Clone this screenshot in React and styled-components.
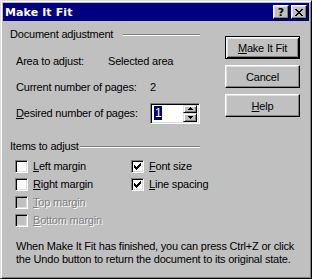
import React from "react";
import styled, { createGlobalStyle, css } from "styled-components";

const Global = createGlobalStyle`
  html, body { margin: 0; padding: 0; background: #c0c0c0; }
  body { font-family: "Liberation Sans", Arial, sans-serif; font-size: 11px; letter-spacing: -0.2px; color: #000; }
`;

const Win = styled.div`
  width: 312px;
  height: 279px;
  box-sizing: border-box;
  background: #c0c0c0;
  border: 1px solid;
  border-color: #dfdfdf #000 #000 #dfdfdf;
  box-shadow: inset 1px 1px #fff, inset -1px -1px #808080;
  padding: 2px;
  display: flex;
  flex-direction: column;
`;

const TitleBar = styled.div`
  height: 18px;
  background: #000080;
  display: flex;
  align-items: center;
  padding: 0 2px 0 2px;
  flex-shrink: 0;
`;

const TitleText = styled.div`
  flex: 1;
  color: #fff;
  font-family: "DejaVu Sans", Verdana, sans-serif;
  font-weight: bold;
  font-size: 11px;
  letter-spacing: 0.1px;
`;

const CapButton = styled.div`
  width: 16px;
  height: 14px;
  box-sizing: border-box;
  background: #c0c0c0;
  border: 1px solid;
  border-color: #fff #000 #000 #fff;
  box-shadow: inset -1px -1px #808080, inset 1px 1px #dfdfdf;
  display: flex;
  align-items: center;
  justify-content: center;
  margin-left: ${(p) => p.$gap || 0}px;
  font-family: "DejaVu Sans", sans-serif;
  font-weight: bold;
  font-size: 11px;
  letter-spacing: 0;
  line-height: 1;
`;

const Body = styled.div`
  flex: 1;
  display: flex;
  flex-direction: column;
`;

const Top = styled.div`
  display: flex;
`;

const LeftCol = styled.div`
  width: 190px;
  padding-left: 7px;
  display: flex;
  flex-direction: column;
`;

const GroupHead = styled.div`
  height: 13px;
  display: flex;
  align-items: center;
  margin-top: ${(p) => p.$top}px;
  line-height: 13px;
`;

const Etch = styled.div`
  flex: 1;
  height: 0;
  border-top: 1px solid #808080;
  border-bottom: 1px solid #fff;
  margin-left: ${(p) => p.$gap}px;
  margin-top: 1px;
`;

const Rows = styled.div`
  margin-top: 7px;
  padding-left: 6px;
  display: flex;
  flex-direction: column;
`;

const Row = styled.div`
  height: 26px;
  display: flex;
  align-items: center;
`;

const RowLabel = styled.div`
  width: ${(p) => p.$w}px;
  flex-shrink: 0;
`;

const Value = styled.div`
  padding-left: ${(p) => p.$pad || 0}px;
`;

const U = styled.span`
  text-decoration: underline;
  text-underline-offset: 1px;
`;

const Field = styled.div`
  width: 54px;
  height: 21px;
  box-sizing: border-box;
  background: #fff;
  border: 1px solid;
  border-color: #808080 #fff #fff #808080;
  box-shadow: inset 1px 1px #000, inset -1px -1px #dfdfdf;
  padding: 2px 2px 2px 3px;
  margin-left: 2px;
  display: flex;
  align-items: center;
`;

const Sel = styled.span`
  background: #000080;
  color: #fff;
  padding: 0 1px;
  line-height: 14px;
  font-size: 12px;
`;

const Spin = styled.div`
  margin-left: auto;
  width: 14px;
  height: 17px;
  display: flex;
  flex-direction: column;
`;

const SpinBtn = styled.div`
  flex: 1;
  box-sizing: border-box;
  background: #c0c0c0;
  border: 1px solid;
  border-color: #dfdfdf #000 #000 #dfdfdf;
  box-shadow: inset 1px 1px #fff, inset -1px -1px #808080;
  display: flex;
  align-items: center;
  justify-content: center;
`;

const Checks = styled.div`
  margin-top: 4px;
  padding-left: 5px;
  display: grid;
  grid-template-columns: 116px auto;
  grid-auto-rows: 18px;
`;

const CheckItem = styled.div`
  display: flex;
  align-items: center;
  gap: 5px;
  white-space: nowrap;
  ${(p) =>
    p.$disabled &&
    css`
      color: #808080;
      text-shadow: 1px 1px 0 #fff;
    `}
`;

const Box = styled.div`
  width: 13px;
  height: 13px;
  box-sizing: border-box;
  background: ${(p) => (p.$disabled ? "#c0c0c0" : "#fff")};
  border: 1px solid;
  border-color: #808080 #fff #fff #808080;
  box-shadow: inset 1px 1px #000, inset -1px -1px #dfdfdf;
  display: flex;
  align-items: center;
  justify-content: center;
  flex-shrink: 0;
`;

const ButtonCol = styled.div`
  margin-left: 25px;
  padding-top: 15px;
  display: flex;
  flex-direction: column;
  gap: 6px;
`;

const Btn = styled.div`
  width: 75px;
  height: 23px;
  box-sizing: border-box;
  background: #c0c0c0;
  display: flex;
  align-items: center;
  justify-content: center;
  ${(p) =>
    p.$default
      ? css`
          border: 1px solid #000;
          box-shadow: inset 1px 1px #fff, inset -1px -1px #000, inset 2px 2px #dfdfdf,
            inset -2px -2px #808080;
        `
      : css`
          border: 1px solid;
          border-color: #fff #000 #000 #fff;
          box-shadow: inset -1px -1px #808080, inset 1px 1px #dfdfdf;
        `}
`;

const Note = styled.div`
  margin-top: 11px;
  padding-left: 13px;
  line-height: 13px;
`;

const Check = () => (
  <svg width="7" height="7" viewBox="0 0 7 7" shapeRendering="crispEdges">
    <path
      fill="#000"
      d="M6 0h1v1H6zM5 1h2v1H5zM0 2h1v1H0zM4 2h3v1H4zM0 3h2v1H0zM3 3h3v1H3zM0 4h5v1H0zM1 5h3v1H1zM2 6h1v1H2z"
    />
  </svg>
);

const CloseGlyph = () => (
  <svg width="8" height="7" viewBox="0 0 8 7" shapeRendering="crispEdges">
    <path
      fill="#000"
      d="M0 0h2v1H0zM6 0h2v1H6zM1 1h2v1H1zM5 1h2v1H5zM2 2h4v1H2zM3 3h2v1H3zM2 4h4v1H2zM1 5h2v1H1zM5 5h2v1H5zM0 6h2v1H0zM6 6h2v1H6z"
    />
  </svg>
);

const Tri = ({ down }) => (
  <svg width="5" height="3" viewBox="0 0 5 3" shapeRendering="crispEdges">
    <path fill="#000" d={down ? "M0 0h5v1H0zM1 1h3v1H1zM2 2h1v1H2z" : "M2 0h1v1H2zM1 1h3v1H1zM0 2h5v1H0z"} />
  </svg>
);

const CheckOpt = ({ checked, disabled, u, rest }) => (
  <CheckItem $disabled={disabled}>
    <Box $disabled={disabled}>{checked && <Check />}</Box>
    <span>
      <U>{u}</U>
      {rest}
    </span>
  </CheckItem>
);

export default function App() {
  return (
    <>
      <Global />
      <Win>
        <TitleBar>
          <TitleText>Make It Fit</TitleText>
          <CapButton>?</CapButton>
          <CapButton $gap={2}>
            <CloseGlyph />
          </CapButton>
        </TitleBar>
        <Body>
          <Top>
            <LeftCol>
              <GroupHead $top={7}>
                Document adjustment
                <Etch $gap={10} />
              </GroupHead>
              <Rows>
                <Row>
                  <RowLabel $w={92}>Area to adjust:</RowLabel>
                  <Value>Selected area</Value>
                </Row>
                <Row>
                  <RowLabel $w={132}>Current number of pages:</RowLabel>
                  <Value $pad={2}>2</Value>
                </Row>
                <Row>
                  <RowLabel $w={132}>
                    <U>D</U>esired number of pages:
                  </RowLabel>
                  <Field>
                    <Sel>1</Sel>
                    <Spin>
                      <SpinBtn>
                        <Tri />
                      </SpinBtn>
                      <SpinBtn>
                        <Tri down />
                      </SpinBtn>
                    </Spin>
                  </Field>
                </Row>
              </Rows>
              <GroupHead $top={14}>
                Items to adjust
                <Etch $gap={1} />
              </GroupHead>
              <Checks>
                <CheckOpt u="L" rest="eft margin" />
                <CheckOpt checked u="F" rest="ont size" />
                <CheckOpt u="R" rest="ight margin" />
                <CheckOpt checked u="L" rest="ine spacing" />
                <CheckOpt disabled u="T" rest="op margin" />
                <span />
                <CheckOpt disabled u="B" rest="ottom margin" />
              </Checks>
            </LeftCol>
            <ButtonCol>
              <Btn $default>
                <span>
                  <U>M</U>ake It Fit
                </span>
              </Btn>
              <Btn>Cancel</Btn>
              <Btn>
                <span>
                  <U>H</U>elp
                </span>
              </Btn>
            </ButtonCol>
          </Top>
          <Note>
            When Make It Fit has finished, you can press Ctrl+Z or click
            <br />
            the Undo button to return the document to its original state.
          </Note>
        </Body>
      </Win>
    </>
  );
}
